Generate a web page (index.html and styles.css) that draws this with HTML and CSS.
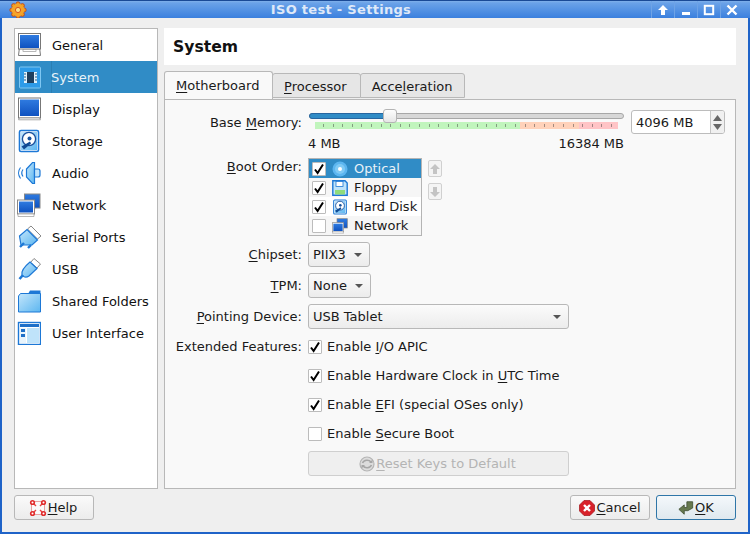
FILE: index.html
```html
<!DOCTYPE html>
<html lang="en">
<head>
<meta charset="utf-8">
<title>ISO test - Settings</title>
<link rel="stylesheet" href="styles.css">
</head>
<body>
<svg class="defs" width="0" height="0" aria-hidden="true">
  <defs>
    <linearGradient id="scr" x1="0" y1="0" x2="0" y2="1"><stop offset="0" stop-color="#2f7be0"/><stop offset="1" stop-color="#0f52c0"/></linearGradient>
    <linearGradient id="lb" x1="0" y1="0" x2="1" y2="1"><stop offset="0" stop-color="#c4e6fb"/><stop offset="1" stop-color="#5cb6f0"/></linearGradient>
    <symbol id="chk" viewBox="0 0 14 14"><path d="M3 7.5 L5.6 11 L11 2.5" fill="none" stroke="#000" stroke-width="2"/></symbol>
    <symbol id="net" viewBox="0 0 24 24">
      <rect x="7.500" y="1" width="15.500" height="14" fill="url(#scr)" stroke="#888"/>
      <rect x=".5" y="7" width="17" height="14" fill="#fff" stroke="#888"/>
      <rect x="2" y="8.500" width="14" height="11" fill="url(#scr)"/>
      <path d="M1 21h16v2.500H1z" fill="#fff" stroke="#999" stroke-width=".7"/>
    </symbol>
    <symbol id="disk" viewBox="0 0 24 24">
      <rect x="2.500" y="1.500" width="19" height="21" rx="1.500" fill="#fff" stroke="#1d78d6" stroke-width="1.600"/>
      <rect x="4" y="3" width="16" height="18" fill="url(#lb)"/>
      <circle cx="12" cy="10" r="6.600" fill="#fff" stroke="#1a4f9c" stroke-width="1.300"/>
      <circle cx="12.500" cy="9.500" r="2" fill="#17539f"/>
      <path d="M4.500 17.500 L13 12.500 L14 14.500 L7 20.500z" fill="#0f4a94"/>
    </symbol>
  </defs>
</svg>
<div class="window">
  <header class="titlebar">
    <div class="tb-app">
      <svg width="18" height="18" viewBox="0 0 18 18"><g fill="#f29a1e" stroke="#b8401a" stroke-width=".8"><circle cx="9" cy="2.800" r="2"/><circle cx="9" cy="15.200" r="2"/><circle cx="2.800" cy="9" r="2"/><circle cx="15.200" cy="9" r="2"/><circle cx="4.600" cy="4.600" r="2"/><circle cx="13.400" cy="4.600" r="2"/><circle cx="4.600" cy="13.400" r="2"/><circle cx="13.400" cy="13.400" r="2"/></g><circle cx="9" cy="9" r="6.400" fill="#f5a428"/><circle cx="9" cy="9" r="2.600" fill="#fbe08a" stroke="#d9541c"/></svg>
    </div>
    <div class="tb-title">ISO test - Settings</div>
    <div class="tb-btn"><svg width="12" height="12" viewBox="0 0 12 12"><path d="M6 1 L11 6 H8 V11 H4 V6 H1z" fill="#fff"/></svg></div>
    <div class="tb-btn"><svg width="12" height="12" viewBox="0 0 12 12"><rect x="2" y="8" width="8" height="3" fill="#fff"/></svg></div>
    <div class="tb-btn"><svg width="12" height="12" viewBox="0 0 12 12"><rect x="1.800" y="1.800" width="8.400" height="8.400" fill="none" stroke="#fff" stroke-width="2"/></svg></div>
    <div class="tb-btn"><svg width="12" height="12" viewBox="0 0 12 12"><path d="M1.500 1.500 L10.500 10.500 M10.500 1.500 L1.500 10.500" stroke="#fff" stroke-width="2.400"/></svg></div>
  </header>

  <div class="client">
    <div class="main">
      <nav class="sidebar">
        <div class="nav-item"><span class="nav-ico">
          <svg width="24" height="24" viewBox="0 0 24 24"><path d="M2.500 14 L1.500 22.500 H23.500 L22.500 14z" fill="#fff" stroke="#777"/><rect x="1.500" y=".5" width="22" height="15.500" fill="#fff" stroke="#777"/><rect x="3" y="2" width="19" height="13" fill="url(#scr)"/><rect x="6" y="16.500" width="13" height="2" fill="#fff" stroke="#888" stroke-width=".6"/></svg>
        </span>General</div>
        <div class="nav-item selected"><span class="nav-ico">
          <svg width="24" height="24" viewBox="0 0 24 24"><rect x="2.500" y="2" width="21" height="21" rx="1" fill="#2d9be8" stroke="#7fc7f2"/><rect x="7" y="7" width="13" height="11" fill="#e3f2fb"/><rect x="10" y="7" width="7" height="11" fill="#1e3f5e"/><path d="M7 9h2M7 12h2M7 15h2M18 9h2M18 12h2M18 15h2" stroke="#1e5f8e" stroke-width="1.200"/></svg>
        </span>System</div>
        <div class="nav-item"><span class="nav-ico">
          <svg width="24" height="24" viewBox="0 0 24 24"><rect x="1.500" y="1" width="22" height="20" fill="#fff" stroke="#777"/><rect x="3" y="2.500" width="19" height="16.500" fill="url(#scr)"/><path d="M2.500 21 L1.500 22.800 H23.500 L22.500 21z" fill="#fff" stroke="#888" stroke-width=".7"/></svg>
        </span>Display</div>
        <div class="nav-item"><span class="nav-ico"><svg width="24" height="24"><use href="#disk"/></svg></span>Storage</div>
        <div class="nav-item"><span class="nav-ico">
          <svg width="24" height="24" viewBox="0 0 24 24"><path d="M9.500 8 L15.500 1.500 H17.500 V22.500 H15.500 L9.500 16z" fill="url(#lb)" stroke="#1d78d6" stroke-width="1.200"/><path d="M17.500 8h3.500a2 2 0 0 1 2 2v4a2 2 0 0 1-2 2h-3.500z" fill="#bfe3fa" stroke="#1d78d6" stroke-width="1.200"/><path d="M6 8.500a6 6 0 0 0 0 7M3.500 6.500a9 9 0 0 0 0 11" fill="none" stroke="#1d78d6" stroke-width="1.200"/></svg>
        </span>Audio</div>
        <div class="nav-item"><span class="nav-ico"><svg width="24" height="24"><use href="#net"/></svg></span>Network</div>
        <div class="nav-item"><span class="nav-ico">
          <svg width="24" height="24" viewBox="0 0 24 24"><path d="M14 1 L24 11 L20.500 14 L10.500 4z" fill="#fff" stroke="#888"/><path d="M10 4.500 L20.500 15 L15 20 L4 20 L2.500 11z" fill="url(#lb)" stroke="#1d78d6" stroke-width="1.200"/><path d="M7 18 L3 22 M14 20 L11 23" stroke="#1d78d6" stroke-width="2.400"/></svg>
        </span>Serial Ports</div>
        <div class="nav-item"><span class="nav-ico">
          <svg width="24" height="24" viewBox="0 0 24 24"><path d="M17 1.500 L23.500 7 L20 11 L13.500 5.500z" fill="#fff" stroke="#888"/><path d="M13 5 L20 11.500 L12 19 C9 21 6 20 5 18 C4 15 7 10 13 5z" fill="url(#lb)" stroke="#1d78d6" stroke-width="1.200"/><path d="M6 18 L2.500 22" stroke="#1d78d6" stroke-width="2.600"/></svg>
        </span>USB</div>
        <div class="nav-item"><span class="nav-ico">
          <svg width="24" height="24" viewBox="0 0 24 24"><path d="M13 1.500 H23.500 V5 H11z" fill="#1d78d6"/><path d="M1.500 7 L3.500 4.500 H23.500 V23 H1.500z" fill="url(#lb)" stroke="#1d78d6"/></svg>
        </span>Shared Folders</div>
        <div class="nav-item"><span class="nav-ico">
          <svg width="24" height="24" viewBox="0 0 24 24"><rect x="1.500" y="1.500" width="22" height="22" fill="#fff" stroke="#1d78d6" stroke-width="1.400"/><rect x="3" y="3" width="19" height="3" fill="#1d6fc8"/><rect x="3" y="7" width="6" height="15" fill="#e8f4fc"/><rect x="4" y="8" width="4" height="3" fill="#1d6fc8"/><rect x="4" y="13" width="4" height="3" fill="#1d6fc8"/><rect x="10" y="7" width="12" height="15" fill="#bfe3fa"/></svg>
        </span>User Interface</div>
      </nav>

      <div class="content">
        <h1 class="page-title">System</h1>
        <div class="tabs">
          <div class="tab active"><u>M</u>otherboard</div>
          <div class="tab tab-mid"><u>P</u>rocessor</div>
          <div class="tab">Acce<u>l</u>eration</div>
        </div>
        <section class="panel">
          <div class="row row-memory">
            <div class="label label-mem">Base <u>M</u>emory:</div>
            <div class="mem">
              <div class="mem-top">
                <div class="slider-col">
                  <div class="slider"><div class="slider-fill"></div><div class="slider-handle"></div></div>
                  <div class="ticks"></div>
                </div>
                <div class="spin">
                  <span class="spin-val">4096 MB</span>
                  <span class="spin-btns">
                    <svg width="9" height="6" viewBox="0 0 9 6"><path d="M4.500 0 L9 6 H0z" fill="#666"/></svg>
                    <svg width="9" height="6" viewBox="0 0 9 6"><path d="M0 0 H9 L4.500 6z" fill="#666"/></svg>
                  </span>
                </div>
              </div>
              <div class="mem-scale"><span>4 MB</span><span>16384 MB</span></div>
            </div>
          </div>

          <div class="row row-boot">
            <div class="label label-boot"><u>B</u>oot Order:</div>
            <div class="boot">
              <ul class="boot-list">
                <li class="boot-item sel"><span class="check"><svg width="14" height="14"><use href="#chk"/></svg></span>
                  <svg class="boot-ico" width="16" height="16" viewBox="0 0 16 16"><circle cx="8" cy="8" r="7.500" fill="#5cb6f0"/><circle cx="8" cy="8" r="5" fill="#7fcaf5"/><circle cx="8" cy="8" r="2" fill="#fff"/></svg>Optical</li>
                <li class="boot-item alt"><span class="check"><svg width="14" height="14"><use href="#chk"/></svg></span>
                  <svg class="boot-ico" width="16" height="16" viewBox="0 0 16 16"><path d="M.8.8H13L15.200 3V15.200H.8z" fill="#bfe3fa" stroke="#1d78d6" stroke-width="1.400"/><rect x="4" y="1.500" width="7" height="5" fill="#fff" stroke="#1d78d6" stroke-width=".8"/><rect x="3" y="10" width="10" height="4.500" fill="#8fdc7a"/></svg>Floppy</li>
                <li class="boot-item"><span class="check"><svg width="14" height="14"><use href="#chk"/></svg></span>
                  <svg class="boot-ico" width="16" height="16"><use href="#disk"/></svg>Hard Disk</li>
                <li class="boot-item alt"><span class="check"></span>
                  <svg class="boot-ico" width="16" height="16"><use href="#net"/></svg>Network</li>
              </ul>
              <div class="boot-arrows">
                <div class="arrow-btn"><svg width="10" height="10" viewBox="0 0 10 10"><path d="M5 0 L10 5 H7 V10 H3 V5 H0z" fill="#c4c4c4"/></svg></div>
                <div class="arrow-btn"><svg width="10" height="10" viewBox="0 0 10 10"><path d="M3 0 H7 V5 H10 L5 10 L0 5 H3z" fill="#c4c4c4"/></svg></div>
              </div>
            </div>
          </div>

          <div class="row row-combo">
            <div class="label"><u>C</u>hipset:</div>
            <div class="combo combo-chip"><span>PIIX3</span><i class="caret"></i></div>
          </div>
          <div class="row row-combo">
            <div class="label"><u>T</u>PM:</div>
            <div class="combo combo-tpm"><span>None</span><i class="caret"></i></div>
          </div>
          <div class="row row-combo">
            <div class="label"><u>P</u>ointing Device:</div>
            <div class="combo combo-wide"><span>USB Tablet</span><i class="caret"></i></div>
          </div>

          <div class="row row-check first">
            <div class="label">Extended Features:</div>
            <div class="opt"><span class="check"><svg width="14" height="14"><use href="#chk"/></svg></span><span>Enable <u>I</u>/O APIC</span></div>
          </div>
          <div class="row row-check">
            <div class="label"></div>
            <div class="opt"><span class="check"><svg width="14" height="14"><use href="#chk"/></svg></span><span>Enable Hardware Clock in <u>U</u>TC Time</span></div>
          </div>
          <div class="row row-check">
            <div class="label"></div>
            <div class="opt"><span class="check"><svg width="14" height="14"><use href="#chk"/></svg></span><span>Enable <u>E</u>FI (special OSes only)</span></div>
          </div>
          <div class="row row-check">
            <div class="label"></div>
            <div class="opt"><span class="check"></span><span>Enable <u>S</u>ecure Boot</span></div>
          </div>
          <div class="row row-reset">
            <div class="label"></div>
            <div class="btn reset">
              <svg width="16" height="16" viewBox="0 0 16 16"><circle cx="8" cy="8" r="7" fill="#dcdcdc" stroke="#b4b4b4" stroke-width="1.200"/><path d="M3.500 7 C5 3.500 10 3.500 12 6 M12.500 9 C11 12.500 6 12.500 4 10" fill="none" stroke="#a6a6a6" stroke-width="1.600"/><path d="M10 7h3.500V3.500zM6 9H2.500v3.500z" fill="#a6a6a6"/></svg>
              <span><u>R</u>eset Keys to Default</span>
            </div>
          </div>
        </section>
      </div>
    </div>

    <footer class="footer">
      <div class="btn foot-btn help">
        <svg width="18" height="18" viewBox="0 0 18 18"><rect x="2.500" y="2.500" width="13" height="13" fill="#fafafa" stroke="#e8a0a0"/><path d="M4 4 L7 7 M14 4 L11 7 M4 14 L7 11 M14 14 L11 11" stroke="#e84040" stroke-width="1.400"/><g fill="#e02c2c"><circle cx="3.500" cy="3.500" r="2.600"/><circle cx="14.500" cy="3.500" r="2.600"/><circle cx="3.500" cy="14.500" r="2.600"/><circle cx="14.500" cy="14.500" r="2.600"/></g><g fill="#fff"><circle cx="3.500" cy="3.500" r="1"/><circle cx="14.500" cy="3.500" r="1"/><circle cx="3.500" cy="14.500" r="1"/><circle cx="14.500" cy="14.500" r="1"/></g></svg>
        <span><u>H</u>elp</span>
      </div>
      <div class="foot-right">
        <div class="btn foot-btn">
          <svg width="16" height="16" viewBox="0 0 16 16"><path d="M5 .5H11L15.500 5V11L11 15.500H5L.5 11V5z" fill="#d8222a" stroke="#a01218" stroke-width=".7"/><path d="M5 5 L11 11 M11 5 L5 11" stroke="#fff" stroke-width="2.400"/></svg>
          <span><u>C</u>ancel</span>
        </div>
        <div class="btn foot-btn default">
          <svg width="16" height="16" viewBox="0 0 18 16"><path d="M10 1 H16.500 V8 L11 11 H7 V15 L1 9.500 L7 4.500 V7.500 H10z" fill="#66794f" stroke="#46553a" stroke-width="1"/></svg>
          <span><u>O</u>K</span>
        </div>
      </div>
    </footer>
  </div>
</div>
</body>
</html>
```
FILE: styles.css
```css
* { box-sizing: border-box; }
html, body { margin: 0; padding: 0; }
body {
  width: 750px;
  height: 534px;
  overflow: hidden;
  font-family: "DejaVu Sans", sans-serif;
  font-size: 13px;
  color: #1a1a1a;
}
.defs { display: block; position: absolute; }
u { text-underline-offset: 2px; text-decoration-thickness: 1px; }
svg { display: block; flex: none; }

.window {
  width: 750px;
  height: 534px;
  display: flex;
  flex-direction: column;
  background: #1f63c8;
  padding: 0 2px 2px;
}
.titlebar {
  height: 18px;
  margin: 0 -2px;
  padding-right: 7px;
  display: flex;
  align-items: center;
  background: linear-gradient(#7fb0ea 0, #6aa2e8 2px, #3b80de 100%);
  border-top: 1px solid #1a4a96;
  flex: none;
}
.tb-app { width: 30px; padding-left: 9px; flex: none; }
.tb-title {
  flex: 1;
  text-align: center;
  font-weight: bold;
  font-size: 13px;
  letter-spacing: .3px;
  color: #dfe9f8;
  padding-left: 108px;
  padding-right: 107px;
  white-space: nowrap;
}
.tb-btn {
  width: 23px;
  height: 17px;
  display: flex;
  align-items: center;
  justify-content: center;
  border-left: 1px solid #6ea3e6;
}
.client {
  flex: 1;
  display: flex;
  flex-direction: column;
  background: #efefef;
  padding: 10px 12px 0;
  min-height: 0;
}
.main { display: flex; gap: 6px; height: 461px; flex: none; }
.sidebar {
  width: 144px;
  flex: none;
  background: #fff;
  border: 1px solid #b8b8b8;
}
.nav-item {
  height: 32px;
  display: flex;
  align-items: center;
  color: #111;
}
.nav-ico { width: 37px; padding-left: 2px; flex: none; }
.nav-item.selected { background: #308cc6; color: #e8f2f8; }
.nav-item.selected .nav-ico { border-right: 1px solid #2a7fb4; height: 100%; display: flex; align-items: center; margin-right: -1px; }

.content { flex: 1; display: flex; flex-direction: column; min-width: 0; }
.page-title {
  margin: 0;
  height: 37px;
  flex: none;
  background: #fff;
  font-size: 15.6px;
  font-weight: bold;
  line-height: 38px;
  padding-left: 9px;
  color: #111;
}
.tabs { display: flex; padding-top: 6px; height: 34px; flex: none; position: relative; z-index: 1; }
.tab {
  height: 25px;
  margin-top: 2px;
  padding: 0 12px 0 11px;
  background: #e6e6e6;
  border: 1px solid #b8b8b8;
  border-radius: 3px 3px 0 0;
  margin-left: -1px;
  line-height: 26px;
  color: #1a1a1a;
}
.tab:first-child { margin-left: 0; }
.tab-mid { padding-right: 13px; }
.tab.active {
  height: 28px;
  margin-top: 0;
  background: #f9f9f9;
  border-bottom: 0;
  line-height: 28px;
  width: 109px;
}
.panel {
  height: 390px;
  flex: none;
  background: #f9f9f9;
  border: 1px solid #b8b8b8;
  display: flex;
  flex-direction: column;
  padding-top: 10px;
}
.row { display: grid; grid-template-columns: 137px 1fr; column-gap: 6px; align-items: center; flex: none; }
.label { text-align: right; white-space: nowrap; color: #1a1a1a; }
.row-memory { align-items: start; height: 48px; }
.label-mem { padding-top: 5px; }
.mem { width: 417px; }
.mem-top { display: flex; gap: 7px; }
.slider-col { width: 316px; padding-left: 1px; padding-top: 2px; flex: none; }
.slider {
  position: relative;
  height: 6px;
  border: 1px solid #a8a8a8;
  border-radius: 3px;
  background: #d8d8d8;
  margin-top: 1px;
}
.slider-fill {
  width: 80px;
  border-radius: 3px 0 0 3px;
  background: #308cc6;
  margin: -1px 0 0 -1px;
  height: 6px;
  border: 1px solid #2766a0;
}
.slider-handle {
  position: absolute;
  left: 73px;
  top: -5px;
  width: 14px;
  height: 14px;
  background: linear-gradient(#fdfdfd, #e6e6e6);
  border: 1px solid #b4b4b4;
  border-radius: 3px;
}
.ticks {
  margin: 3px 0 0 6px;
  width: 303px;
  height: 7px;
  background:
    repeating-linear-gradient(90deg, transparent 0 8px, rgba(70,70,70,.5) 8px 9px, transparent 9px 9.6px) 0 2px / 100% 3px no-repeat,
    linear-gradient(90deg, #c1f5bd 0 205px, #ffd2ba 205px 264px, #ffc4c6 264px 303px);
}
.spin {
  width: 94px;
  height: 24px;
  background: #fff;
  border: 1px solid #bcbcbc;
  border-radius: 3px;
  display: flex;
  align-items: center;
  justify-content: space-between;
  overflow: hidden;
}
.spin-val { padding-left: 4px; }
.spin-btns {
  width: 14px;
  height: 100%;
  border-left: 1px solid #c4c4c4;
  background: #f0f0f0;
  display: flex;
  flex-direction: column;
  align-items: center;
  justify-content: center;
  gap: 3px;
}
.mem-scale { display: flex; justify-content: space-between; width: 316px; margin-top: 1px; padding-top: 1px; }

.row-boot { align-items: start; height: 84px; }
.label-boot { padding-top: 1px; }
.boot { display: flex; gap: 6px; }
.boot-list {
  list-style: none;
  margin: 0;
  padding: 0;
  width: 114px;
  height: 78px;
  background: #fff;
  border: 1px solid #b4b4b4;
}
.boot-item { height: 19px; display: flex; align-items: center; white-space: nowrap; color: #1a1a1a; padding-left: 3px; }
.boot-item .check { margin: 0 6px 0 0; }
.boot-ico { margin-right: 6px; }
.boot-item.sel { background: #308cc6; color: #e8f2f8; }
.boot-item.alt { background: #f6f6f6; }
.boot-arrows { display: flex; flex-direction: column; gap: 6px; padding-top: 2px; }
.arrow-btn {
  width: 14px;
  height: 17px;
  display: flex;
  align-items: center;
  justify-content: center;
  background: #f4f4f4;
  border: 1px solid #d0d0d0;
  border-radius: 2px;
}
.check {
  width: 14px;
  height: 14px;
  background: #fff;
  border: 1px solid #bcbcbc;
  border-radius: 1px;
  display: inline-block;
  flex: none;
}
.check svg { margin: -1px; }

.row-combo { height: 25px; margin-bottom: 6px; }
.combo {
  height: 25px;
  display: flex;
  align-items: center;
  justify-content: space-between;
  padding: 0 7px 0 4px;
  background: linear-gradient(#fbfbfb, #ececec);
  border: 1px solid #b8b8b8;
  border-radius: 3px;
}
.combo-chip { width: 62px; }
.combo-tpm { width: 63px; }
.combo-wide { width: 261px; }
.caret { width: 0; height: 0; border: 4px solid transparent; border-top: 4px solid #555; border-bottom: 0; }

.row-check { height: 29px; }
.row-check.first { margin-top: -3px; }
.opt { display: flex; align-items: center; gap: 5px; white-space: nowrap; color: #1a1a1a; }
.row-reset { height: 25px; margin-top: 3px; }

.btn {
  display: flex;
  align-items: center;
  justify-content: center;
  background: linear-gradient(#fafafa, #ececec);
  border: 1px solid #b8b8b8;
  border-radius: 3px;
}
.reset { width: 261px; height: 25px; color: #b4b4b4; background: #efefef; border-color: #cfcfcf; padding-right: 2px; }
.reset svg { margin-right: 1px; }

.footer { display: flex; justify-content: space-between; align-items: center; height: 25px; margin-top: 6px; flex: none; }
.foot-right { display: flex; gap: 6px; }
.foot-btn { width: 80px; height: 25px; color: #1a1a1a; }
.foot-btn svg { margin-right: 1px; }
.help { padding-right: 2px; }
.default { border-color: #2f76a8; background: linear-gradient(#f4f8fb, #dfe8ee); }
```
